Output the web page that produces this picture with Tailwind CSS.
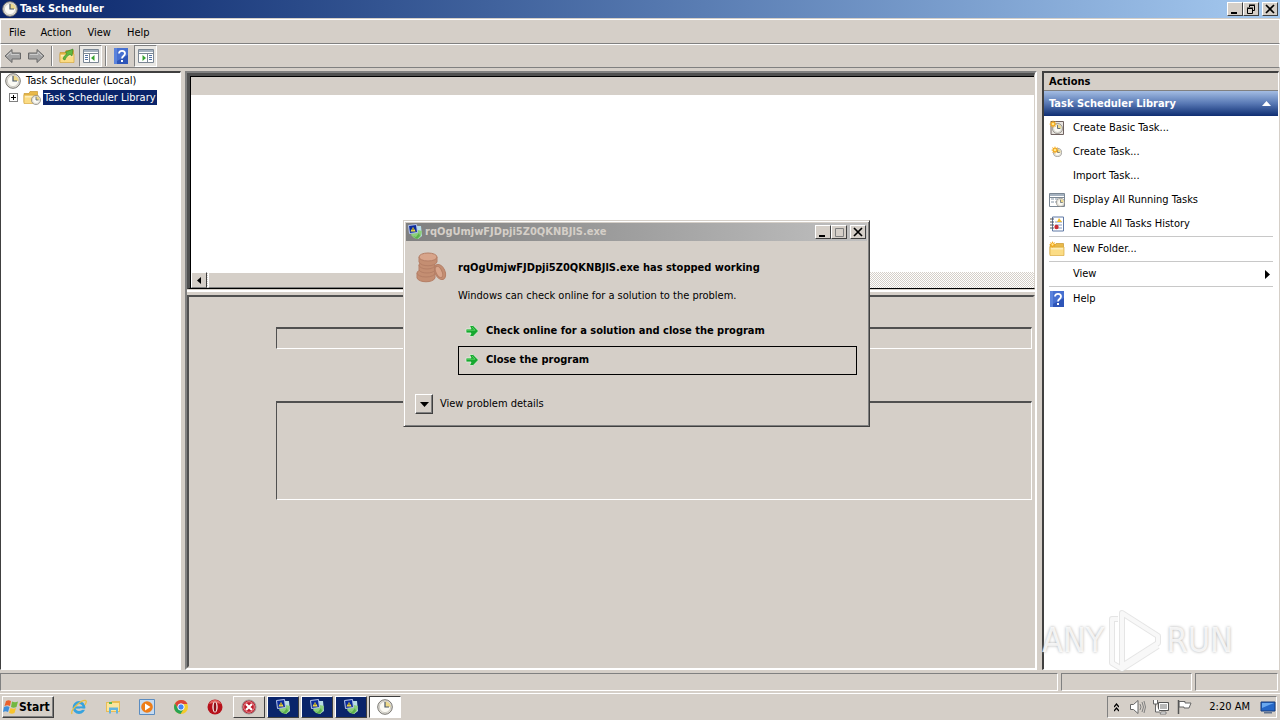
<!DOCTYPE html>
<html lang="en">
<head>
  <meta charset="UTF-8">
  <meta name="viewport" content="width=device-width, initial-scale=1">
  <title>Task Scheduler</title>
  <script src="https://cdn.jsdelivr.net/npm/@tailwindcss/browser@4"></script>
</head>
<body class="relative flex h-screen flex-col overflow-hidden bg-[#d5cfc8] font-['DejaVu_Sans_Condensed','DejaVu_Sans',sans-serif] text-[11px] leading-4 text-black">

  <!-- shared icons -->
  <svg class="hidden" aria-hidden="true">
    <symbol id="clock" viewBox="0 0 16 16">
      <circle cx="8" cy="8" r="7.3" fill="#e4e2dc" stroke="#77756f"/>
      <circle cx="8" cy="8" r="5.6" fill="#fbfaf4" stroke="#b9b6ad" stroke-width=".6"/>
      <path d="M8 8V2.4A5.6 5.6 0 0 1 13.6 8z" fill="#eed98a"/>
      <path d="M8 3v5h4" fill="none" stroke="#48586b" stroke-width="1.2"/>
    </symbol>
    <symbol id="folder" viewBox="0 0 16 16">
      <path d="M1 4.5h5l1-2h7.500v11H1z" fill="#e9b949" stroke="#c9962f" stroke-width=".7"/>
      <path d="M1 6h14v8.500H1z" fill="#fbdc85" stroke="#d9a940" stroke-width=".7"/>
      <path d="M2 7h12v1.500H2z" fill="#fdedb9"/>
    </symbol>
    <symbol id="star" viewBox="0 0 8 8">
      <path d="M4 0l.9 2.200L7 1 5.900 3.200 8 4l-2.100.9L7 7 4.900 5.900 4 8l-.9-2.100L1 7l1.100-2.100L0 4l2.100-.8L1 1l2.100 1.200z" fill="#f3a81c"/>
      <circle cx="4" cy="4" r="1.300" fill="#ffe88e"/>
    </symbol>
    <symbol id="help" viewBox="0 0 14 16">
      <path d="M0 0h14v16H0z" fill="#2e55b8"/>
      <path d="M0 0h3v16H0z" fill="#5b83dc"/>
      <path d="M3 0h11v7L3 13z" fill="#4770d0"/>
      <path d="M5 5.500C5 2 11 2 11 5.500 11 8 8 8 8 10.500" fill="none" stroke="#fff" stroke-width="1.800"/>
      <path d="M7 12h2v2H7z" fill="#fff"/>
    </symbol>
    <symbol id="sheet" viewBox="0 0 16 14">
      <path d="M.5.5h15v13H.5z" fill="#fff" stroke="#7b8794"/>
      <path d="M1 1h14v2H1z" fill="#a5b2c0"/>
      <path d="M1 4.500h14" stroke="#7b8794"/>
    </symbol>
    <symbol id="app" viewBox="0 0 16 16">
      <path d="M7 2h7l1 10-4 3-5-3z" fill="#b8dce5"/>
      <path d="M5 9l4-1 2-2 4 1-1 5-3 3-4-1-3-3z" fill="#8ccf7c"/>
      <path d="M6 12l3 1 3-4 1 3-3 3z" fill="#5bb04c"/>
      <path d="M1.500 1.500l8-1 1 8-8 1z" fill="#0b2a9a" stroke="#bac9ee"/>
      <path d="M6 3l2.700 4.500H3.500z" fill="#ffe443"/>
      <path d="M6 4.300v2" stroke="#111" stroke-width=".8"/>
    </symbol>
    <symbol id="go" viewBox="0 0 14 14">
      <path d="M1 5h5L4.500 1.500h3.700L13.500 7l-5.300 5.500H4.500L6 9H1z" fill="#16a82f" stroke="#e6efe0" stroke-width=".8"/>
      <path d="M2 6.200h8L7 3" fill="none" stroke="#67d96c" stroke-width=".8"/>
    </symbol>
  </svg>

  <!-- title bar -->
  <header class="flex h-[18px] shrink-0 items-center bg-linear-to-r from-[#0a246a] to-[#a6caf0] pr-0.5 pl-0.5 text-white">
    <svg class="size-4"><use href="#clock"/></svg>
    <h1 class="ml-0.5 flex-1 font-bold">Task Scheduler</h1>
    <div class="flex text-black">
      <button aria-label="Minimize" class="flex h-[14px] w-4 items-center justify-center border border-t-white border-l-white border-r-[#404040] border-b-[#404040] bg-[#d5cfc8]"><svg class="size-3" viewBox="0 0 12 12"><path d="M2 9h6v2H2z"/></svg></button>
      <button aria-label="Restore" class="flex h-[14px] w-4 items-center justify-center border border-t-white border-l-white border-r-[#404040] border-b-[#404040] bg-[#d5cfc8]"><svg class="size-3" viewBox="0 0 12 12" fill="none" stroke="#000"><path d="M4.500 4V2.500h5v5H8M4 2h6M2.500 5.500h5v5h-5zM2 5h6"/></svg></button>
      <button aria-label="Close" class="ml-[3px] flex h-[14px] w-4 items-center justify-center border border-t-white border-l-white border-r-[#404040] border-b-[#404040] bg-[#d5cfc8]"><svg class="size-3" viewBox="0 0 12 12"><path d="M2 2l8 8M10 2l-8 8" stroke="#000" stroke-width="1.700"/></svg></button>
    </div>
  </header>

  <nav class="mt-px flex h-[25px] shrink-0 items-center border border-white border-b-[#808080] pt-0.5 pl-px">
    <button class="px-[7px]">File</button>
    <button class="px-2">Action</button>
    <button class="px-2">View</button>
    <button class="px-2">Help</button>
  </nav>

  <!-- toolbar -->
  <div class="flex h-6 shrink-0 items-center border border-white border-b-[#808080] pl-[3px]">
    <button aria-label="Back"><svg class="h-4 w-[18px]" viewBox="0 0 18 16"><path d="M1 8l7-6.500V5h8.500v6H8v3.500z" fill="#a3a3a3" stroke="#686868"/><path d="M3 8l4-4v2.500h8" fill="none" stroke="#ccc"/></svg></button>
    <button aria-label="Forward" class="ml-[5px]"><svg class="h-4 w-[18px]" viewBox="0 0 18 16"><path d="M17 8l-7-6.500V5H1.500v6H10v3.500z" fill="#a3a3a3" stroke="#686868"/><path d="M3 6.500h8V4l4 4" fill="none" stroke="#ccc"/></svg></button>
    <span class="mx-[6px] h-5 w-0.5 border-l border-r border-l-[#808080] border-r-white"></span>
    <button aria-label="Up one level"><svg class="size-4" viewBox="0 0 16 16"><use href="#folder"/><path d="M4 11c1-3 2-4 4-5L6.500 4 14 1l-1 7-2-1.500C8 8 7 9 6 12z" fill="#62b93f" stroke="#36801f" stroke-width=".6"/></svg></button>
    <button aria-label="Show tree" class="ml-1 flex h-[22px] w-[23px] items-center justify-center border border-t-[#808080] border-l-[#808080] border-r-white border-b-white bg-[#e9e7e3]"><svg class="h-[14px] w-4" viewBox="0 0 16 14"><use href="#sheet"/><path d="M6.500 5v9" stroke="#7b8794"/><path d="M2 6.500h3M2 8.500h3M2 10.500h3" stroke="#5274a5"/><path d="M11.500 6v6L8 9z" fill="#36a32f"/></svg></button>
    <span class="mx-[3px] h-5 w-0.5 border-l border-r border-l-[#808080] border-r-white"></span>
    <button aria-label="Help" class="ml-1"><svg class="h-4 w-[14px]"><use href="#help"/></svg></button>
    <button aria-label="Show actions" class="ml-[6px] flex h-[22px] w-[23px] items-center justify-center border border-t-[#808080] border-l-[#808080] border-r-white border-b-white bg-[#e9e7e3]"><svg class="h-[14px] w-4" viewBox="0 0 16 14"><use href="#sheet"/><path d="M9.500 5v9" stroke="#7b8794"/><path d="M11 6.500h3M11 8.500h3M11 10.500h3" stroke="#5274a5"/><path d="M4.500 6v6L8 9z" fill="#36a32f"/></svg></button>
  </div>

  <main class="mt-[3px] flex min-h-0 flex-1">
    <!-- console tree -->
    <aside class="w-[181px] shrink-0 border border-t-2 border-t-[#404040] border-l-[#404040] border-r-white border-b-white bg-white">
      <div class="flex h-4 items-center pl-1"><svg class="size-4"><use href="#clock"/></svg><span class="ml-[5px]">Task Scheduler (Local)</span></div>
      <div class="flex h-4 items-center pl-2">
        <button aria-label="Expand" class="flex size-[9px] items-center justify-center border border-[#808080]"><svg class="size-[7px]" viewBox="0 0 7 7"><path d="M1 3.500h5M3.500 1v5" stroke="#000"/></svg></button>
        <svg class="ml-[5px] h-4 w-[18px]" viewBox="0 0 18 16"><use href="#folder" width="16" height="16"/><use href="#clock" x="8" y="6" width="10" height="10"/></svg>
        <a href="#" class="ml-[2px] bg-[#0a246a] px-px leading-[15px] text-white">Task Scheduler Library</a>
      </div>
    </aside>

    <!-- center -->
    <section class="ml-1 flex min-w-0 flex-1 flex-col border-2 border-t-[#808080] border-l-[#808080] border-r-white border-b-white">
      <div class="h-[216px] shrink-0 border-t-[3px] border-r border-b border-l-[3px] border-t-[#505050] border-r-[#d5cfc8] border-b-black border-l-[#505050] bg-white">
        <div class="flex h-full flex-col border-t border-l border-black">
          <div class="h-[18px] bg-[#d5cfc8]"></div>
          <div class="flex-1"></div>
          <div class="flex h-4 bg-[repeating-conic-gradient(#d5cfc8_0_25%,#fff_0_50%)] bg-size-[2px_2px]">
            <button aria-label="Scroll left" class="flex w-4 items-center justify-center border border-t-white border-l-white border-r-[#404040] border-b-[#808080] bg-[#d5cfc8]"><svg class="h-[7px] w-1" viewBox="0 0 4 7"><path d="M4 0v7L0 3.500z"/></svg></button>
            <div class="ml-px w-3/5 border border-t-white border-l-white border-r-[#404040] border-b-[#808080] bg-[#d5cfc8]"></div>
          </div>
        </div>
      </div>
      <div class="mt-px h-[5px] shrink-0 border-t-2 border-white"></div>
      <div class="flex flex-1 flex-col border-2 border-t-[#505050] border-r-[#d5cfc8] border-b-[#d5cfc8] border-l-[#505050] pt-[30px] pr-px pl-[87px]">
        <div class="h-[22px] shrink-0 border border-t-2 border-t-[#505050] border-r-white border-b-white border-l-[#505050]"></div>
        <div class="mt-[52px] h-[99px] shrink-0 border border-t-2 border-t-[#505050] border-r-white border-b-white border-l-[#505050]"></div>
      </div>
    </section>

    <!-- actions -->
    <aside class="mr-px ml-[5px] flex w-[237px] shrink-0 flex-col border border-t-2 border-l-2 border-t-[#404040] border-r-white border-b-white border-l-[#404040] bg-white">
      <h2 class="h-[18px] border-b border-[#808080] bg-[#d5cfc8] pt-px pl-[5px] font-bold">Actions</h2>
      <h3 class="flex h-[25px] items-center justify-between bg-linear-to-b from-[#a4bde3] via-[#5878b4] to-[#0f2d72] pr-[7px] pl-[5px] font-bold text-white">Task Scheduler Library <svg class="h-[5px] w-[9px]" viewBox="0 0 9 5"><path d="M4.500 0L9 5H0z" fill="#fff"/></svg></h3>
      <ul class="pr-[5px] pl-[5px]">
        <li><a href="#" class="flex h-6 items-center gap-2"><svg class="size-4" viewBox="0 0 16 16"><path d="M2 1.500h12.500v13H2z" fill="#e8e4df" stroke="#6f6260"/><use href="#clock" x="3" y="3" width="11" height="11"/><use href="#star" width="8" height="8"/></svg>Create Basic Task...</a></li>
        <li><a href="#" class="flex h-6 items-center gap-2"><svg class="size-4" viewBox="0 0 16 16"><use href="#clock" x="4" y="4" width="9" height="9"/><use href="#star" x="2" y="2" width="8" height="8"/></svg>Create Task...</a></li>
        <li><a href="#" class="flex h-6 items-center pl-6">Import Task...</a></li>
        <li><a href="#" class="flex h-6 items-center gap-2"><svg class="size-4" viewBox="0 0 16 16"><use href="#sheet" y="1" width="16" height="14"/><path d="M2 7h3m1 0h3M2 10h3m1 0h2" stroke="#8494a5"/><use href="#clock" x="7" y="6" width="9" height="9"/></svg>Display All Running Tasks</a></li>
        <li><a href="#" class="flex h-6 items-center gap-2"><svg class="size-4" viewBox="0 0 16 16"><path d="M3.500 1h11v14h-11z" fill="#fff" stroke="#5f79a5"/><path d="M1 3h4M1 6h4M1 9h4M1 12h4" stroke="#555"/><path d="M6 6h7M6 9h7M6 12h7" stroke="#8899bb"/><path d="M10 2l3 4H8z" fill="#f2bd28"/><circle cx="7.500" cy="11" r="2.200" fill="#c92e35"/></svg>Enable All Tasks History</a></li>
        <li class="border-t border-[#c8c8c8]"><a href="#" class="flex h-6 items-center gap-2"><svg class="size-4" viewBox="0 0 16 16"><use href="#folder"/><use href="#star" width="7" height="7"/></svg>New Folder...</a></li>
        <li class="border-t border-[#c8c8c8]"><a href="#" class="flex h-6 items-center justify-between pr-[3px] pl-6">View <svg class="h-[9px] w-[5px]" viewBox="0 0 5 9"><path d="M0 0l5 4.500L0 9z"/></svg></a></li>
        <li class="border-t border-[#c8c8c8]"><a href="#" class="flex h-6 items-center gap-2"><svg class="h-4 w-4"><use href="#help"/></svg>Help</a></li>
      </ul>
    </aside>
  </main>

  <!-- status bar -->
  <footer class="mt-[3px] flex h-[18px] shrink-0 gap-[3px] pr-0.5">
    <div class="flex-1 border border-t-[#808080] border-r-white border-b-white border-l-[#808080]"></div>
    <div class="w-[131px] border border-t-[#808080] border-r-white border-b-white border-l-[#808080]"></div>
    <div class="w-[83px] border border-t-[#808080] border-r-white border-b-white border-l-[#808080]"></div>
  </footer>

  <!-- taskbar -->
  <div class="mt-0.5 flex h-[27px] shrink-0 items-center border-t border-white pl-0.5">
    <button class="flex h-[22px] w-[52px] items-center border border-t-white border-r-[#404040] border-b-[#404040] border-l-white text-[12px] font-bold shadow-[inset_-1px_-1px_#808080]">
      <svg class="size-4 shrink-0" viewBox="0 0 16 16"><path d="M3 2c2-1 3-1 5 0L7 7C5 6 4 6 1.500 7z" fill="#e9602c"/><path d="M9 2.500c2 1 4 1 6 0L13.500 8c-2 1-4 1-5.500 0z" fill="#72b840"/><path d="M1 8c2-1 4-1 5.500 0L5 13c-2-1-3-1-5 0z" fill="#3d8edb"/><path d="M7.500 9c2 1 4 1 5.500 0l-1.500 5c-2 1-3 1-5.500 0z" fill="#f8c42d"/></svg>Start</button>
    <div class="ml-[17px] flex items-center gap-[18px]">
      <button aria-label="Internet Explorer"><svg class="size-4" viewBox="0 0 16 16"><circle cx="8" cy="8.500" r="5" fill="none" stroke="#37a3de" stroke-width="2.800"/><path d="M4 8.500h9" stroke="#37a3de" stroke-width="2.200"/><path d="M9 10.200h6" stroke="#d5cfc8" stroke-width="1.300"/><path d="M1 15C-1 11 10 1 14.500 1.500c1.500.5.5 3-.8 4.500" fill="none" stroke="#e9c042" stroke-width="1.300"/></svg></button>
      <button aria-label="Explorer"><svg class="size-4" viewBox="0 0 16 16"><path d="M1 3h5l1-1h8v11H1z" fill="#e9bd56"/><path d="M2 4h12v8H2z" fill="#fbe59c"/><path d="M4 8.500h9v6h-2V11H6v3.500H4z" fill="#62b4df"/><path d="M4 3h3v2H4z" fill="#57b84f"/></svg></button>
      <button aria-label="Media Player"><svg class="size-4" viewBox="0 0 16 16"><path d="M.5.5h15v15H.5z" fill="#c6dbf1" stroke="#5b8cc0"/><circle cx="8" cy="8" r="5.800" fill="#ee7d18"/><path d="M6 4.500v7L11.500 8z" fill="#fff"/></svg></button>
      <button aria-label="Chrome"><svg class="size-4" viewBox="0 0 16 16"><circle cx="8" cy="8" r="7" fill="#f4ca2b"/><path d="M2 4.500A7 7 0 0 1 14.500 5H8L5 10z" fill="#dc4437"/><path d="M2 4.500A7 7 0 0 0 7.500 15L11 9.500 5 9.800z" fill="#27a354"/><circle cx="8" cy="8" r="3.200" fill="#4285f4" stroke="#fff"/></svg></button>
      <button aria-label="Opera"><svg class="size-4" viewBox="0 0 16 16"><circle cx="8" cy="8" r="7.500" fill="#b7111b"/><path d="M2 5a6.500 6.500 0 0 1 12 0c-4-1.500-8-1.500-12 0z" fill="#e26460"/><ellipse cx="8" cy="8" rx="2.700" ry="5.500" fill="#f4e8e6"/><ellipse cx="8" cy="8" rx="1.300" ry="4.700" fill="#8e1017"/></svg></button>
    </div>
    <div class="ml-[10px] flex gap-0.5">
      <button aria-label="Process monitor" class="flex h-[22px] w-8 items-center justify-center border border-t-white border-r-[#404040] border-b-[#404040] border-l-white"><svg class="size-4" viewBox="0 0 16 16"><circle cx="8" cy="8" r="7" fill="#bd1b2b" stroke="#999"/><circle cx="8" cy="8" r="5.300" fill="none" stroke="#e68a8d"/><path d="M5 5l6 6M11 5l-6 6" stroke="#fff" stroke-width="2.200"/></svg></button>
      <button aria-label="Application error 1" class="flex h-[22px] w-8 items-center justify-center border border-t-white border-r-[#404040] border-b-[#404040] border-l-white bg-[#0a246a]"><svg class="size-4"><use href="#app"/></svg></button>
      <button aria-label="Application error 2" class="flex h-[22px] w-8 items-center justify-center border border-t-white border-r-[#404040] border-b-[#404040] border-l-white bg-[#0a246a]"><svg class="size-4"><use href="#app"/></svg></button>
      <button aria-label="Application error 3" class="flex h-[22px] w-8 items-center justify-center border border-t-white border-r-[#404040] border-b-[#404040] border-l-white bg-[#0a246a]"><svg class="size-4"><use href="#app"/></svg></button>
      <button aria-label="Task Scheduler" class="flex h-[22px] w-8 items-center justify-center border border-t-[#404040] border-r-white border-b-white border-l-[#404040] bg-white"><svg class="size-4"><use href="#clock"/></svg></button>
    </div>
    <div class="mr-[3px] ml-auto flex h-[22px] items-center border border-t-[#808080] border-r-white border-b-white border-l-[#808080] pl-[6px]">
      <button aria-label="Show hidden icons"><svg class="h-[9px] w-[5px]" viewBox="0 0 5 9" fill="none" stroke="#000" stroke-width="1.300"><path d="M0 4l2.500-3L5 4M0 8l2.500-3L5 8"/></svg></button>
      <svg class="ml-[10px] h-4 w-[18px]" viewBox="0 0 18 16"><path d="M1.500 5.500h3L9 1.500v13l-4.500-4h-3z" fill="#fff" stroke="#666"/><path d="M11 5q2 3 0 6m2-8q3 5 0 10m2-11q3 6 0 12" fill="none" stroke="#808080"/></svg>
      <svg class="ml-[6px] size-4" viewBox="0 0 16 16"><path d="M5.500 3.500h10v8h-10z" fill="#b8b8b8" stroke="#555"/><path d="M6.500 4.500h8v6h-8z" fill="none" stroke="#fff"/><path d="M8 13h5v2H7z" fill="#fff" stroke="#666" stroke-width=".8"/><path d="M.5 1v4h4V1m-2 4v8H7" fill="#fff" stroke="#666"/></svg>
      <svg class="ml-2 size-4" viewBox="0 0 16 16"><path d="M2 2.500h6v1.500h6l-2 5H7V8H2z" fill="#fff" stroke="#666"/><path d="M1.500 1v14" stroke="#555" stroke-width="1.500"/></svg>
      <time class="ml-4">2:20 AM</time>
      <button aria-label="Show desktop" class="ml-[10px]"><svg class="size-4" viewBox="0 0 16 16"><path d="M1 3h14v9H1z" fill="#2567c7" stroke="#173c7c"/><path d="M2 4h12L2 9z" fill="#69a8ef"/><path d="M4 13h8v1.500H4z" fill="#60738f"/></svg></button>
    </div>
  </div>

  <!-- watermark -->
  <div class="pointer-events-none absolute right-[47px] bottom-[48px] flex items-center text-[34px] leading-[64px] text-white/80 [text-shadow:0_0_3px_#aaa]">
    <span>ANY</span>
    <svg class="mx-px h-16 w-[60px]" viewBox="0 0 60 64" fill="none" stroke-linejoin="round"><path d="M17 5l36 23v7L17 58zM13 11H7v44l10 6 36-23" stroke="#d4d4d4" stroke-width="6" opacity=".6"/><path d="M17 5l36 23v7L17 58zM13 11H7v44l10 6 36-23" stroke="#f8f8f8" stroke-width="4"/></svg>
    <span>RUN</span>
  </div>

  <!-- error dialog -->
  <div role="dialog" aria-labelledby="dialog-title" class="absolute top-[220px] left-[403px] h-[207px] w-[467px] border border-t-[#d5cfc8] border-r-[#404040] border-b-[#404040] border-l-[#d5cfc8] bg-[#d5cfc8] p-px shadow-[inset_1px_1px_#fff,inset_-1px_-1px_#808080]">
    <div class="m-px flex h-[18px] items-center bg-linear-to-r from-[#808080] to-[#c0c0c0] pr-px pl-px">
      <svg class="size-4"><use href="#app"/></svg>
      <h2 id="dialog-title" class="ml-0.5 flex-1 font-bold text-[#d5cfc8]">rqOgUmjwFJDpji5Z0QKNBJlS.exe</h2>
      <button aria-label="Minimize" class="flex h-[14px] w-4 items-center justify-center border border-t-white border-r-[#404040] border-b-[#404040] border-l-white bg-[#d5cfc8]"><svg class="size-3" viewBox="0 0 12 12"><path d="M2 9h6v2H2z"/></svg></button>
      <button aria-label="Maximize" disabled class="flex h-[14px] w-4 items-center justify-center border border-t-white border-r-[#404040] border-b-[#404040] border-l-white bg-[#d5cfc8]"><svg class="size-3" viewBox="0 0 12 12"><path d="M2.500 2.500h8v8h-8z" fill="none" stroke="#808080"/></svg></button>
      <button aria-label="Close" class="ml-[3px] flex h-[14px] w-4 items-center justify-center border border-t-white border-r-[#404040] border-b-[#404040] border-l-white bg-[#d5cfc8]"><svg class="size-3" viewBox="0 0 12 12"><path d="M2 2l8 8M10 2l-8 8" stroke="#000" stroke-width="1.700"/></svg></button>
    </div>
    <div class="flex pt-[10px] pr-[11px] pl-[10px]">
      <svg class="size-8 shrink-0" viewBox="0 0 32 32" fill="#c48e72" stroke="#b57f66"><path d="M2 21v5c2 5 16 5 18 0v-5z"/><ellipse cx="11" cy="21" rx="9" ry="4"/><path d="M4 13v5c2 4 14 4 16 0v-5z"/><ellipse cx="12" cy="13" rx="8" ry="4"/><path d="M4 5v5c2 5 16 5 18 0V5z"/><ellipse cx="13" cy="5" rx="9" ry="4" fill="#d8a58b"/><ellipse cx="25" cy="20" rx="5" ry="8" transform="rotate(-25 25 20)"/><ellipse cx="24" cy="20" rx="3" ry="6" fill="#d8a58b" transform="rotate(-25 24 20)"/></svg>
      <div class="ml-[11px] flex-1">
        <p class="mt-2 font-bold">rqOgUmjwFJDpji5Z0QKNBJlS.exe has stopped working</p>
        <p class="mt-3">Windows can check online for a solution to the problem.</p>
        <button class="mt-3 flex h-[29px] w-full items-center gap-[7px] border border-transparent pl-[6px] font-bold"><svg class="size-[14px]"><use href="#go"/></svg>Check online for a solution and close the program</button>
        <button class="mt-px flex h-[29px] w-full items-center gap-[7px] border border-black pb-0.5 pl-[6px] font-bold"><svg class="size-[14px]"><use href="#go"/></svg>Close the program</button>
      </div>
    </div>
    <div class="mt-[19px] flex items-center gap-[7px] pl-[10px]">
      <button id="details" aria-label="View problem details" class="flex h-5 w-[18px] items-center justify-center border border-t-white border-r-[#404040] border-b-[#404040] border-l-white shadow-[inset_-1px_-1px_#808080]"><svg class="h-[5px] w-[9px]" viewBox="0 0 9 5"><path d="M0 0h9L4.500 5z"/></svg></button>
      <label for="details">View problem details</label>
    </div>
  </div>

</body>
</html>
